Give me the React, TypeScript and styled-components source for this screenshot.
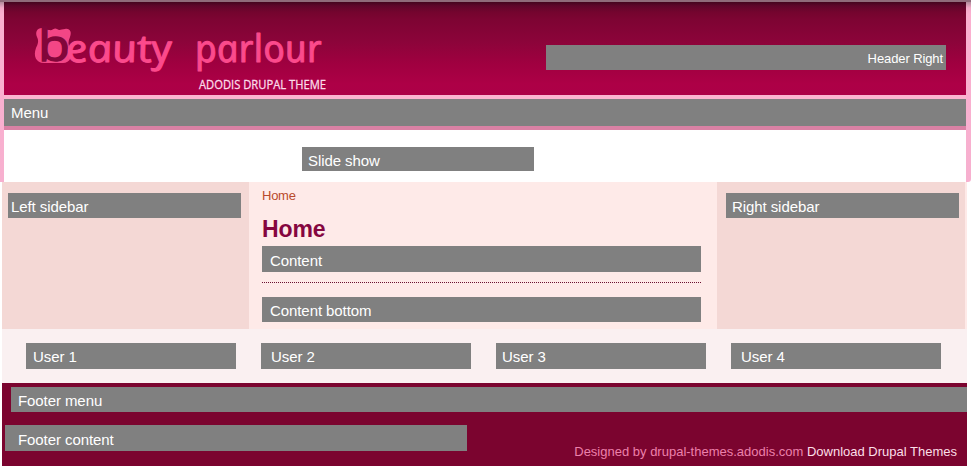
import React from "react";
import styled, { createGlobalStyle } from "styled-components";

const GlobalStyle = createGlobalStyle`
  * { box-sizing: border-box; }
  body { margin: 0; background: #fff; font-family: "Liberation Sans", Arial, sans-serif; }
`;

const Page = styled.div`
  width: 971px;
  height: 476px;
  overflow: hidden;
  background: #fff;
`;

const TopFrame = styled.div`
  height: 182px;
  padding: 0 5px 0 4px;
  background: linear-gradient(#8f6b7b 0 2px, #b18a9b 2px, #f3a9c8 8px, #fbb0d0 14px, #f7b0cf 100%);
  border-radius: 0 0 3px 0;
`;

const Header = styled.header`
  height: 95px;
  padding: 0 20px 0 31px;
  display: flex;
  justify-content: space-between;
  border-top: 2px solid #8f6b7b;
  background: linear-gradient(#44051f 0, #5f062b 4px, #74042e 10px, #7e0433 18px, #8c043a 40px, #a00040 62px, #ad0046 82px, #ac0047 100%);
`;

const Logo = styled.svg`
  width: 300px;
  height: 93px;
  display: block;
  overflow: visible;
`;

const Wordmark = styled.text`
  font-family: "Open Sans", "Noto Sans", sans-serif;
  font-style: italic;
  font-weight: 400;
  font-size: 38px;
  fill: #fb4a8c;
  stroke: #fb4a8c;
  stroke-width: 1px;
  stroke-linejoin: round;
`;

const Initial = styled.text`
  font-family: "Open Sans", "Noto Sans", sans-serif;
  font-weight: 400;
  font-size: 43px;
  fill: #82063a;
  stroke: #82063a;
  stroke-width: 1.3px;
`;

const Tagline = styled.text`
  font-family: "Open Sans", "Noto Sans", sans-serif;
  font-weight: 500;
  font-size: 13px;
  fill: #fbdcea;
  stroke: #fbdcea;
  stroke-width: 0.3px;
`;

const Block = styled.div<{ $w?: number; $h?: number; $pad?: number; $drop?: number }>`
  width: ${(p) => (p.$w ? `${p.$w}px` : "100%")};
  height: ${(p) => p.$h ?? 25}px;
  padding-left: ${(p) => p.$pad ?? 8}px;
  padding-top: ${(p) => p.$drop ?? 1}px;
  line-height: 26px;
  flex: none;
  background: #808080;
  color: #fff;
  font-size: 15px;
  letter-spacing: -0.08px;
  white-space: nowrap;
`;

const HeaderRight = styled(Block)`
  margin-top: 43px;
  padding-right: 3px;
  text-align: right;
  font-size: 13px;
  letter-spacing: -0.1px;
`;

const MenuBar = styled.nav`
  height: 35px;
  border-top: 4px solid #fab5d0;
  border-bottom: 4px solid #d981a4;
`;

const SlideArea = styled.section`
  height: 52px;
  padding: 17px 0 0 298px;
  background: #fff;
`;

const Main = styled.div`
  width: 965px;
  margin-left: 2px;
`;

const Columns = styled.div`
  height: 147px;
  display: grid;
  grid-template-columns: 247px 468px 248px 2px;
  background: #feeae8;
`;

const Sidebar = styled.aside<{ $left: number }>`
  padding: 11px 0 0 ${(p) => p.$left}px;
  background: #f4d8d5;
`;

const Center = styled.main`
  padding: 6px 0 0 13px;
`;

const Breadcrumb = styled.div`
  height: 16px;
  line-height: 16px;
  font-size: 13px;
  letter-spacing: -0.25px;
  color: #b94a2c;
`;

const Title = styled.h1`
  margin: 9px 0 2px;
  height: 31px;
  line-height: 32px;
  font-size: 23px;
  letter-spacing: -0.1px;
  color: #85063f;
`;

const Divider = styled.div`
  width: 439px;
  margin: 10px 0 14px;
  border-top: 1px dotted #6b1030;
`;

const Users = styled.section`
  height: 54px;
  padding: 14px 0 0 24px;
  display: flex;
  gap: 25px;
  background: #faf0f1;
`;

const Footer = styled.footer`
  height: 83px;
  padding-top: 4px;
  background: #7b042f;
`;

const FooterMenu = styled.div`
  padding-left: 9px;
`;

const FooterRow = styled.div`
  margin-top: 13px;
  padding: 0 10px 0 3px;
  display: flex;
  justify-content: space-between;
`;

const Credit = styled.div`
  margin-top: 18px;
  line-height: 18px;
  font-size: 13px;
  white-space: nowrap;
  color: #ec80ab;
`;

const CreditLink = styled.span`
  color: #fbdfe8;
`;

export default function App() {
  return (
    <Page>
      <GlobalStyle />
      <TopFrame>
        <Header>
          <Logo viewBox="35 2 300 93">
            <path
              d="M42 28C37 28 35 32 37 37C39 41 38 44 36 48C33 56 36 63 44 63H63C70 63 73 56 70 49C68 45 68 41 70 37C72 32 70 28 65 29C61 29 60 31 57 29C54 27 53 31 49 30C46 30 45 28 42 28Z"
              fill="#f34686"
            />
            <Initial x="38" y="61" textLength="32" lengthAdjust="spacingAndGlyphs">b</Initial>
            <g transform="translate(0 62) skewX(12)">
              <Wordmark x="68" y="0" textLength="106" lengthAdjust="spacingAndGlyphs">eauty</Wordmark>
              <Wordmark x="197" y="0" textLength="127" lengthAdjust="spacingAndGlyphs">parlour</Wordmark>
            </g>
            <Tagline x="199" y="89" textLength="127" lengthAdjust="spacingAndGlyphs">ADODIS DRUPAL THEME</Tagline>
          </Logo>
          <HeaderRight $w={400}>Header Right</HeaderRight>
        </Header>
        <MenuBar>
          <Block $h={27} $pad={7}>Menu</Block>
        </MenuBar>
        <SlideArea>
          <Block $w={232} $h={24} $pad={6}>Slide show</Block>
        </SlideArea>
      </TopFrame>
      <Main>
        <Columns>
          <Sidebar $left={6}>
            <Block $w={233} $pad={3}>Left sidebar</Block>
          </Sidebar>
          <Center>
            <Breadcrumb>Home</Breadcrumb>
            <Title>Home</Title>
            <Block $w={439} $h={26} $drop={2}>Content</Block>
            <Divider />
            <Block $w={439}>Content bottom</Block>
          </Center>
          <Sidebar $left={9}>
            <Block $w={233} $pad={6}>Right sidebar</Block>
          </Sidebar>
        </Columns>
        <Users>
          <Block $w={210} $h={26} $pad={7}>User 1</Block>
          <Block $w={210} $h={26} $pad={10}>User 2</Block>
          <Block $w={210} $h={26} $pad={6}>User 3</Block>
          <Block $w={210} $h={26} $pad={10}>User 4</Block>
        </Users>
        <Footer>
          <FooterMenu>
            <Block $pad={7}>Footer menu</Block>
          </FooterMenu>
          <FooterRow>
            <Block $w={462} $h={26} $pad={13} $drop={2}>Footer content</Block>
            <Credit>
              Designed by drupal-themes.adodis.com <CreditLink>Download Drupal Themes</CreditLink>
            </Credit>
          </FooterRow>
        </Footer>
      </Main>
    </Page>
  );
}
